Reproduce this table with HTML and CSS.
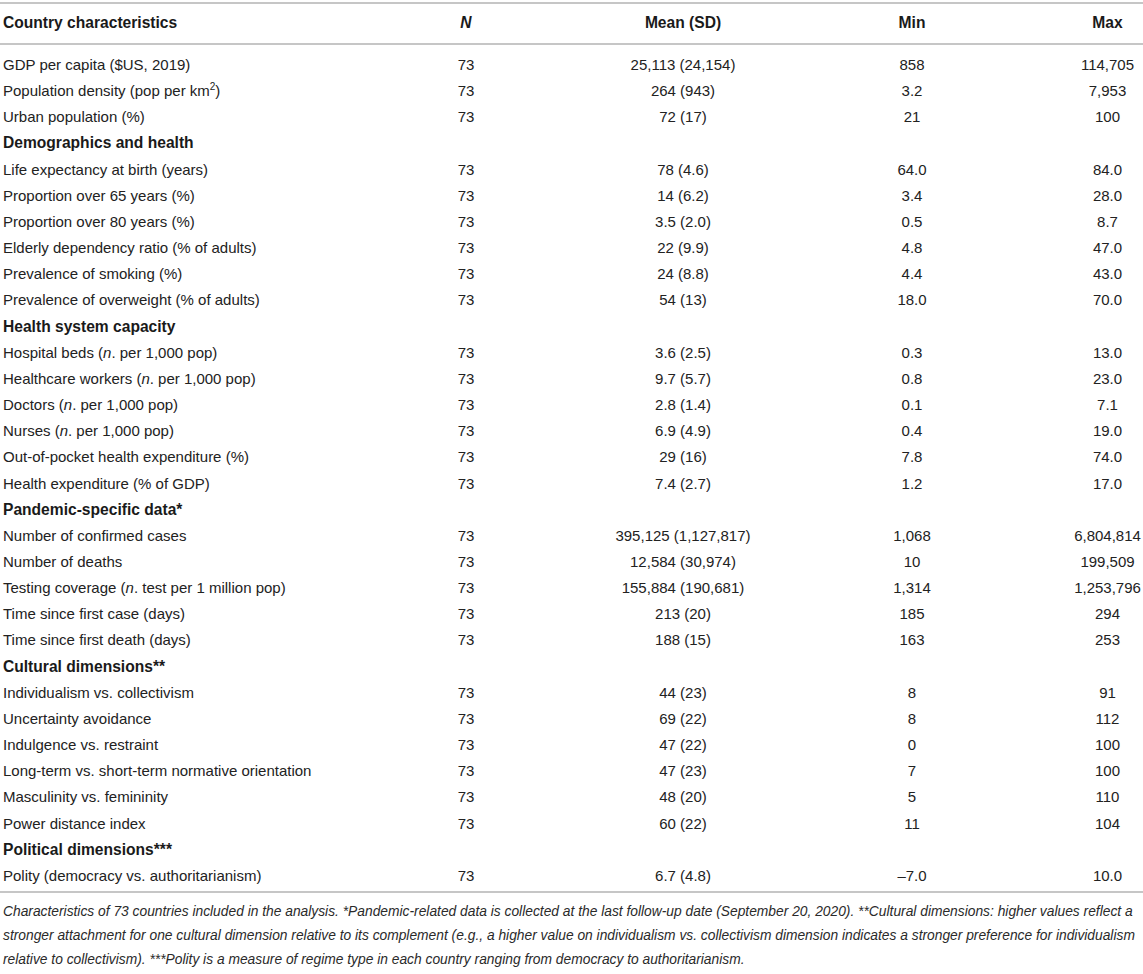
FILE: index.html
```html
<!DOCTYPE html>
<html lang="en">
<head>
<meta charset="utf-8">
<title>Country characteristics</title>
<link rel="stylesheet" href="styles.css">
</head>
<body>
<div class="wrap">
<table class="stats">
  <colgroup>
    <col class="w-label"><col class="w-n"><col class="w-mean"><col class="w-min"><col class="w-max">
  </colgroup>
  <thead>
    <tr>
      <th class="label">Country characteristics</th>
      <th><i>N</i></th>
      <th>Mean (SD)</th>
      <th>Min</th>
      <th class="max">Max</th>
    </tr>
  </thead>
  <tbody>
    <tr class="first"><td class="label">GDP per capita ($US, 2019)</td><td>73</td><td>25,113 (24,154)</td><td>858</td><td class="max">114,705</td></tr>
    <tr><td class="label">Population density (pop per km<sup>2</sup>)</td><td>73</td><td>264 (943)</td><td>3.2</td><td class="max">7,953</td></tr>
    <tr><td class="label">Urban population (%)</td><td>73</td><td>72 (17)</td><td>21</td><td class="max">100</td></tr>
    <tr class="section"><td class="label" colspan="5">Demographics and health</td></tr>
    <tr><td class="label">Life expectancy at birth (years)</td><td>73</td><td>78 (4.6)</td><td>64.0</td><td class="max">84.0</td></tr>
    <tr><td class="label">Proportion over 65 years (%)</td><td>73</td><td>14 (6.2)</td><td>3.4</td><td class="max">28.0</td></tr>
    <tr><td class="label">Proportion over 80 years (%)</td><td>73</td><td>3.5 (2.0)</td><td>0.5</td><td class="max">8.7</td></tr>
    <tr><td class="label">Elderly dependency ratio (% of adults)</td><td>73</td><td>22 (9.9)</td><td>4.8</td><td class="max">47.0</td></tr>
    <tr><td class="label">Prevalence of smoking (%)</td><td>73</td><td>24 (8.8)</td><td>4.4</td><td class="max">43.0</td></tr>
    <tr><td class="label">Prevalence of overweight (% of adults)</td><td>73</td><td>54 (13)</td><td>18.0</td><td class="max">70.0</td></tr>
    <tr class="section"><td class="label" colspan="5">Health system capacity</td></tr>
    <tr><td class="label">Hospital beds (<i>n</i>. per 1,000 pop)</td><td>73</td><td>3.6 (2.5)</td><td>0.3</td><td class="max">13.0</td></tr>
    <tr><td class="label">Healthcare workers (<i>n</i>. per 1,000 pop)</td><td>73</td><td>9.7 (5.7)</td><td>0.8</td><td class="max">23.0</td></tr>
    <tr><td class="label">Doctors (<i>n</i>. per 1,000 pop)</td><td>73</td><td>2.8 (1.4)</td><td>0.1</td><td class="max">7.1</td></tr>
    <tr><td class="label">Nurses (<i>n</i>. per 1,000 pop)</td><td>73</td><td>6.9 (4.9)</td><td>0.4</td><td class="max">19.0</td></tr>
    <tr><td class="label">Out-of-pocket health expenditure (%)</td><td>73</td><td>29 (16)</td><td>7.8</td><td class="max">74.0</td></tr>
    <tr><td class="label">Health expenditure (% of GDP)</td><td>73</td><td>7.4 (2.7)</td><td>1.2</td><td class="max">17.0</td></tr>
    <tr class="section"><td class="label" colspan="5">Pandemic-specific data*</td></tr>
    <tr><td class="label">Number of confirmed cases</td><td>73</td><td>395,125 (1,127,817)</td><td>1,068</td><td class="max">6,804,814</td></tr>
    <tr><td class="label">Number of deaths</td><td>73</td><td>12,584 (30,974)</td><td>10</td><td class="max">199,509</td></tr>
    <tr><td class="label">Testing coverage (<i>n</i>. test per 1 million pop)</td><td>73</td><td>155,884 (190,681)</td><td>1,314</td><td class="max">1,253,796</td></tr>
    <tr><td class="label">Time since first case (days)</td><td>73</td><td>213 (20)</td><td>185</td><td class="max">294</td></tr>
    <tr><td class="label">Time since first death (days)</td><td>73</td><td>188 (15)</td><td>163</td><td class="max">253</td></tr>
    <tr class="section"><td class="label" colspan="5">Cultural dimensions**</td></tr>
    <tr><td class="label">Individualism vs. collectivism</td><td>73</td><td>44 (23)</td><td>8</td><td class="max">91</td></tr>
    <tr><td class="label">Uncertainty avoidance</td><td>73</td><td>69 (22)</td><td>8</td><td class="max">112</td></tr>
    <tr><td class="label">Indulgence vs. restraint</td><td>73</td><td>47 (22)</td><td>0</td><td class="max">100</td></tr>
    <tr><td class="label">Long-term vs. short-term normative orientation</td><td>73</td><td>47 (23)</td><td>7</td><td class="max">100</td></tr>
    <tr><td class="label">Masculinity vs. femininity</td><td>73</td><td>48 (20)</td><td>5</td><td class="max">110</td></tr>
    <tr><td class="label">Power distance index</td><td>73</td><td>60 (22)</td><td>11</td><td class="max">104</td></tr>
    <tr class="section"><td class="label" colspan="5">Political dimensions***</td></tr>
    <tr class="last"><td class="label">Polity (democracy vs. authoritarianism)</td><td>73</td><td>6.7 (4.8)</td><td>&ndash;7.0</td><td class="max">10.0</td></tr>
  </tbody>
</table>
<p class="caption">Characteristics of 73 countries included in the analysis. *Pandemic-related data is collected at the last follow-up date (September 20, 2020). **Cultural dimensions: higher values reflect a stronger attachment for one cultural dimension relative to its complement (e.g., a higher value on individualism vs. collectivism dimension indicates a stronger preference for individualism relative to collectivism). ***Polity is a measure of regime type in each country ranging from democracy to authoritarianism.</p>
</div>
</body>
</html>
```

FILE: styles.css
```css
html, body {
  margin: 0;
  padding: 0;
  background: #ffffff;
}

body {
  font-family: "Liberation Sans", Arial, Helvetica, sans-serif;
  color: #222222;
  width: 1143px;
}

.wrap {
  padding-top: 2px;
}

.stats {
  width: 1143px;
  table-layout: fixed;
  border-collapse: separate;
  border-spacing: 0;
  font-size: 15px;
}

.w-label { width: 360px; }
.w-n { width: 212px; }
.w-mean { width: 222px; }
.w-min { width: 236px; }
.w-max { width: 113px; }

.stats th,
.stats td {
  padding: 0;
  text-align: center;
  white-space: nowrap;
  vertical-align: middle;
}

.stats th {
  font-weight: bold;
  font-size: 15.6px;
  color: #1a1a1a;
  line-height: 38px;
  padding-bottom: 1px;
  border-top: 2px solid #c6c6c6;
  border-bottom: 2px solid #c6c6c6;
}

.stats td {
  line-height: 26.16px;
}

.stats .label {
  text-align: left;
  padding-left: 3px;
}

.stats .max {
  padding-left: 42px;
}

.stats tr.first td {
  padding-top: 7px;
}

.stats tr.last td {
  padding-bottom: 2px;
  border-bottom: 2px solid #c6c6c6;
}

.stats tr.section td {
  font-weight: bold;
  font-size: 15.6px;
  color: #1a1a1a;
}

.stats sup {
  font-size: 10px;
  line-height: 0;
  vertical-align: 6px;
}

.caption {
  margin: 7px 0 0 0;
  padding-left: 3px;
  font-size: 13.8px;
  line-height: 24px;
  font-style: italic;
  color: #2a2a2a;
}
```
